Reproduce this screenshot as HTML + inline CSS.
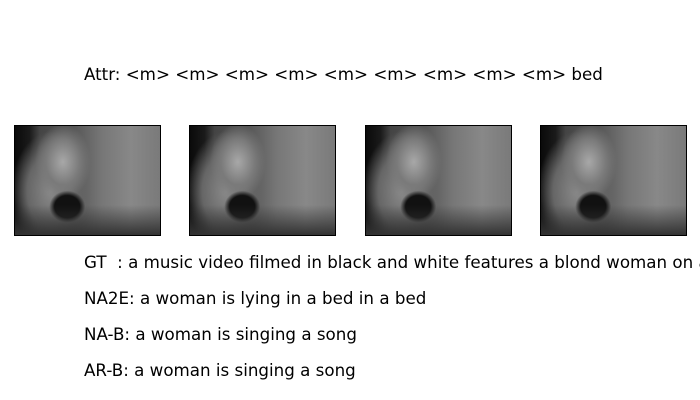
<!DOCTYPE html>
<html><head><style>
body{margin:0;width:700px;height:400px;background:#fff;position:relative;overflow:hidden;font-family:"DejaVu Sans",sans-serif;font-size:16.7px;color:#000}
.t{position:absolute;left:84px;white-space:nowrap;line-height:20px}
.f{position:absolute;top:125px;width:145px;height:109px;border:1px solid #000;overflow:hidden;
background:
radial-gradient(ellipse 18px 16px at 36% 74%,#111 70%,transparent 100%),
radial-gradient(ellipse 28px 38px at 33% 33%,#a8a8a8 0%,#7a7a7a 60%,transparent 100%),
radial-gradient(ellipse 40px 60px at 25% 60%,#8a8a8a 0%,#666 60%,transparent 100%),
linear-gradient(90deg,#0a0a0a 0%,#1a1a1a 10%,#444 17%,#555 40%,#777 60%,#888 80%,#7a7a7a 100%);}
.f:after{content:"";position:absolute;left:0;right:0;bottom:0;height:30px;background:linear-gradient(180deg,transparent,#333)}
</style></head><body>
<div class="t" style="top:64px">Attr: &lt;m&gt; &lt;m&gt; &lt;m&gt; &lt;m&gt; &lt;m&gt; &lt;m&gt; &lt;m&gt; &lt;m&gt; &lt;m&gt; bed</div>
<div class="f" style="left:14px"></div>
<div class="f" style="left:189px"></div>
<div class="f" style="left:365px"></div>
<div class="f" style="left:540px"></div>
<div class="t" style="top:252px">GT&nbsp; : a music video filmed in black and white features a blond woman on a</div>
<div class="t" style="top:288px">NA2E: a woman is lying in a bed in a bed</div>
<div class="t" style="top:324px">NA-B: a woman is singing a song</div>
<div class="t" style="top:360px">AR-B: a woman is singing a song</div>
</body></html>
